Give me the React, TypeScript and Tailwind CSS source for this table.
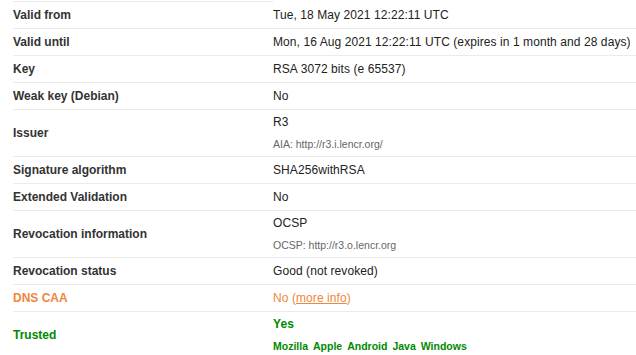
import type { ReactNode } from "react";

type Row = {
  label: string;
  value: ReactNode;
  sub?: ReactNode;
  labelClass?: string;
};

const rows: Row[] = [
  { label: "Valid from", value: "Tue, 18 May 2021 12:22:11 UTC" },
  {
    label: "Valid until",
    value: "Mon, 16 Aug 2021 12:22:11 UTC (expires in 1 month and 28 days)",
  },
  { label: "Key", value: "RSA 3072 bits (e 65537)" },
  { label: "Weak key (Debian)", value: "No" },
  { label: "Issuer", value: "R3", sub: "AIA: http://r3.i.lencr.org/" },
  { label: "Signature algorithm", value: "SHA256withRSA" },
  { label: "Extended Validation", value: "No" },
  {
    label: "Revocation information",
    value: "OCSP",
    sub: "OCSP: http://r3.o.lencr.org",
  },
  { label: "Revocation status", value: "Good (not revoked)" },
  {
    label: "DNS CAA",
    labelClass: "text-[#f0873c]",
    value: (
      <span className="text-[#f0873c]">
        No (<span className="underline">more info</span>)
      </span>
    ),
  },
  {
    label: "Trusted",
    labelClass: "text-[#008a00]",
    value: <span className="font-bold text-[#008a00]">Yes</span>,
    sub: (
      <span className="flex gap-[5px] text-[10.5px] font-bold text-[#008a00]">
        <span>Mozilla</span>
        <span>Apple</span>
        <span>Android</span>
        <span>Java</span>
        <span>Windows</span>
      </span>
    ),
  },
];

export default function App() {
  return (
    <div className="min-h-[355px] bg-white pt-[1px] pl-[13px] font-['Liberation_Sans',Arial,sans-serif] text-[12px]">
      {rows.map((row, i) => (
        <div
          key={row.label}
          className={
            "grid grid-cols-[260px_1fr] " +
            (i === 0 ? "" : "border-t border-[#ebebeb] ") +
            (row.sub ? "h-[47px]" : "h-[27px]")
          }
        >
          <div
            className={
              "flex items-center font-bold " +
              (i === 0 ? "border-t border-[#ebebeb] " : "") +
              (row.labelClass ?? "text-[#333]")
            }
          >
            {row.label}
          </div>
          {row.sub ? (
            <div className="flex flex-col pt-[3px] tracking-[0.08px] text-[#222]">
              <div className="leading-[18px]">{row.value}</div>
              <div className="mt-[6px] text-[10.5px] leading-[14px] tracking-normal text-[#666]">
                {row.sub}
              </div>
            </div>
          ) : (
            <div
              className={
                "flex items-center tracking-[0.08px] text-[#222] " +
                (i === 0 ? "border-t border-transparent" : "")
              }
            >
              {row.value}
            </div>
          )}
        </div>
      ))}
    </div>
  );
}
